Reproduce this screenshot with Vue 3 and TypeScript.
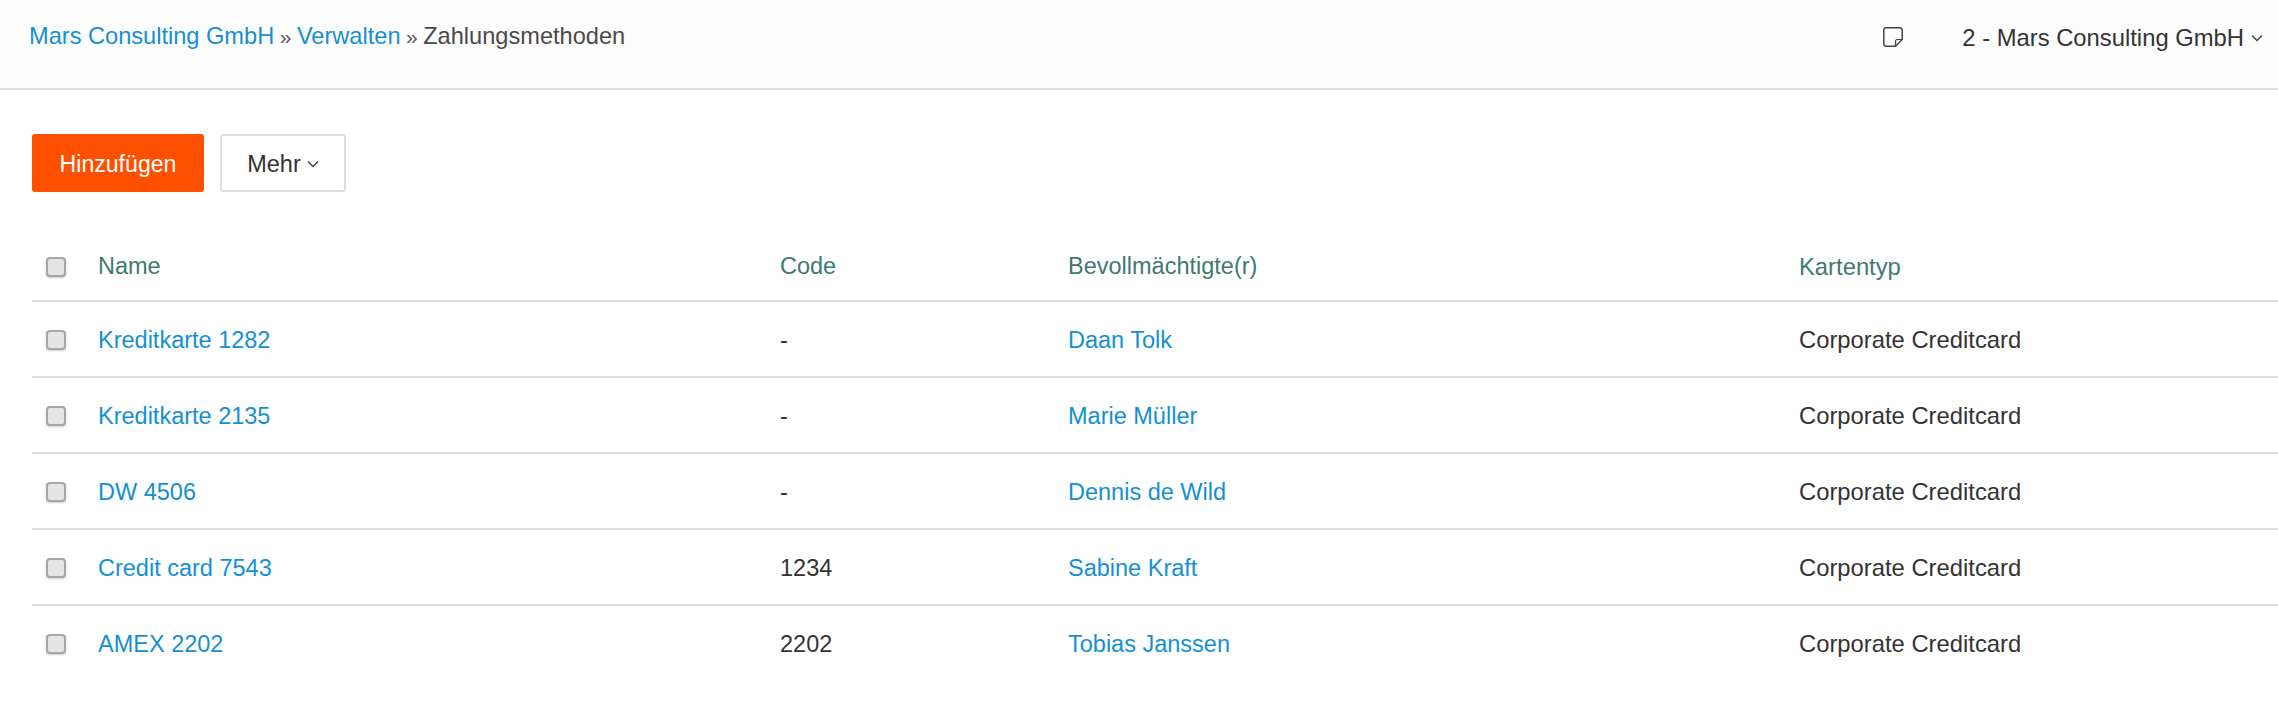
<script setup lang="ts">
interface Row { name: string; code: string; holder: string; type: string }
const rows: Row[] = [
  { name: 'Kreditkarte 1282', code: '-', holder: 'Daan Tolk', type: 'Corporate Creditcard' },
  { name: 'Kreditkarte 2135', code: '-', holder: 'Marie Müller', type: 'Corporate Creditcard' },
  { name: 'DW 4506', code: '-', holder: 'Dennis de Wild', type: 'Corporate Creditcard' },
  { name: 'Credit card 7543', code: '1234', holder: 'Sabine Kraft', type: 'Corporate Creditcard' },
  { name: 'AMEX 2202', code: '2202', holder: 'Tobias Janssen', type: 'Corporate Creditcard' },
]
</script>

<template>
  <div class="page">
    <header class="topbar">
      <nav class="crumbs">
        <a>Mars Consulting GmbH</a><span class="sep">»</span><a>Verwalten</a><span class="sep">»</span><span>Zahlungsmethoden</span>
      </nav>
      <div class="top-right">
        <svg class="note" width="20" height="20" viewBox="0 0 20 20" fill="none" stroke="#444" stroke-width="1.500">
          <path d="M3 .8h14A2.200 2.200 0 0 1 19.200 3v9.500l-6.700 6.700H3A2.200 2.200 0 0 1 .8 17V3A2.200 2.200 0 0 1 3 .8z" />
          <path d="M19.200 12.500h-4.700a2 2 0 0 0-2 2v4.700" stroke-width="1.200" />
        </svg>
        <div class="company">
          <span>2 - Mars Consulting GmbH</span>
          <svg class="chev" width="12" height="8" viewBox="0 0 12 8" fill="none" stroke="#444" stroke-width="1.500"><path d="M1 1.500l5 5 5-5" /></svg>
        </div>
      </div>
    </header>

    <main class="content">
      <div class="actions">
        <button class="btn primary">Hinzufügen</button>
        <button class="btn outline">Mehr<svg class="chev small" width="12" height="8" viewBox="0 0 12 8" fill="none" stroke="#444" stroke-width="1.500"><path d="M1 1.500l5 5 5-5" /></svg></button>
      </div>

      <div class="table">
        <div class="row head">
          <div class="c-check"><span class="check"></span></div>
          <div class="c-name">Name</div>
          <div class="c-code">Code</div>
          <div class="c-holder">Bevollmächtigte(r)</div>
          <div class="c-type">Kartentyp</div>
        </div>
        <div v-for="r in rows" :key="r.name" class="row">
          <div class="c-check"><span class="check"></span></div>
          <div class="c-name"><a>{{ r.name }}</a></div>
          <div class="c-code">{{ r.code }}</div>
          <div class="c-holder"><a>{{ r.holder }}</a></div>
          <div class="c-type">{{ r.type }}</div>
        </div>
      </div>
    </main>
  </div>
</template>

<style>
html, body { background: #fff; }
</style>

<style scoped>
.page {
  font-family: "Liberation Sans", Arial, sans-serif;
  font-size: 23.5px;
  color: #333;
  height: 714px;
  overflow: hidden;
}
a { color: #1490d2; }
.topbar {
  height: 88px;
  box-sizing: content-box;
  background: #fdfdfd;
  border-bottom: 2px solid #dedede;
  display: flex;
  justify-content: space-between;
  padding: 0 15px 0 29px;
}
.crumbs { padding-top: 22px; line-height: 28px; color: #4a4a4a; font-size: 23.6px; }
.sep { margin: 0 5.500px; color: #555; font-size: 21px; }
.top-right { display: flex; align-items: flex-start; padding-top: 27px; }
.note { margin-right: 59px; }
.company { display: flex; align-items: center; line-height: 22px; color: #333; font-size: 23.8px; }
.company .chev { margin-left: 7px; }
.content { padding: 44px 0 0 32px; }
.actions { display: flex; gap: 16px; }
.btn {
  font: inherit;
  height: 58px;
  border-radius: 3px;
  display: flex;
  align-items: center;
  justify-content: center;
  box-sizing: border-box;
  padding: 2px 0 0;
}
.primary { width: 172px; background: #ff5000; color: #fff; border: none; font-size: 23.1px; }
.outline { width: 126px; background: #fff; color: #333; border: 2px solid #dedede; }
.small { margin-left: 6px; }
.table { margin-top: 32px; }
.row {
  display: flex;
  align-items: center;
  height: 76px;
  box-sizing: border-box;
  border-bottom: 2px solid #dedede;
  padding-top: 2px;
}
.row:last-child { border-bottom: 2px solid transparent; }
.head { height: 78px; color: #3f7a72; padding-top: 9px; }
.c-check { width: 66px; flex: none; padding-left: 14px; box-sizing: border-box; display: flex; }
.c-name { width: 682px; flex: none; }
.c-code { width: 288px; flex: none; }
.c-holder { width: 730px; flex: none; }
.c-type { flex: 1; font-size: 23.8px; padding-left: 1px; }
.check {
  width: 20px;
  height: 20px;
  box-sizing: border-box;
  border: 2px solid #a6a6a6;
  border-radius: 4px;
  background: #e4e4e4;
  box-shadow: 0 1px 2px rgba(0,0,0,.2);
}
</style>
